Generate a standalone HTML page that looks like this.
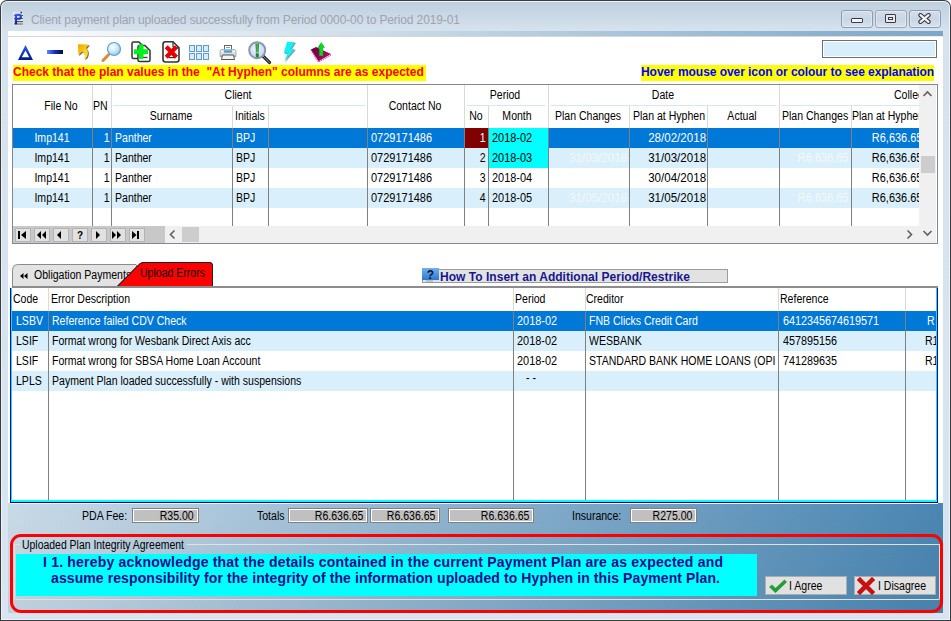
<!DOCTYPE html><html><head><meta charset="utf-8"><style>body{margin:0;width:951px;height:621px;overflow:hidden;position:relative;font-family:"Liberation Sans",sans-serif}</style></head><body><div style="position:absolute;left:0;top:0;width:951px;height:621px;background:#3c3c3c;border-radius:7px 7px 0 0"></div>
<div style="position:absolute;left:1px;top:1px;width:949px;height:619px;background:#eef3f9;border-radius:6px 6px 0 0"></div>
<div style="position:absolute;left:2px;top:2px;width:947px;height:617px;background:linear-gradient(#bfcfdd 0px,#d6e3ef 29px,#d8e4f0 100%);border-radius:5px 5px 0 0"></div>
<svg style="position:absolute;left:12px;top:11px" width="12" height="16" viewBox="0 0 12 16">
<defs><linearGradient id="pgr" x1="0" y1="0" x2="0.3" y2="1"><stop offset="0" stop-color="#4070ff"/><stop offset="1" stop-color="#0018a8"/></linearGradient></defs>
<rect x="1" y="1" width="10" height="13.6" fill="#ece8e0"/>
<g fill="#5a5a5a"><rect x="2" y="4" width="9" height="1"/><rect x="2" y="7" width="9" height="1"/><rect x="5" y="10" width="6" height="1.2"/><rect x="2" y="12.5" width="9" height="1"/></g>
<path d="M2.8 2.8H7.3Q9.9 2.8 9.9 5.7Q9.9 8.7 7.3 8.7H5.1V13.2H2.8Z M5.1 4.8V6.8H6.9Q7.7 6.8 7.7 5.8Q7.7 4.8 6.9 4.8Z" fill="url(#pgr)" fill-rule="evenodd"/>
<rect x="8.5" y="0.8" width="1.6" height="1.6" fill="#333"/>
</svg>
<div style="position:absolute;left:31px;top:11px;font-size:12px;line-height:18px;color:#a0a2b0;white-space:pre;letter-spacing:-0.12px">Client payment plan uploaded successfully from Period 0000-00 to Period 2019-01</div>
<div style="position:absolute;left:841px;top:10px;width:30px;height:16px;border:1px solid #8d9ab4;border-radius:3px;background:linear-gradient(#d2deea,#c8d6e4 50%,#d6e2ee);box-shadow:inset 0 0 0 1px rgba(255,255,255,0.35)"></div>
<div style="position:absolute;left:851px;top:18px;width:10px;height:3px;background:#f4f4f4;border:1px solid #3a3a4a;border-radius:1px"></div>
<div style="position:absolute;left:875px;top:10px;width:30px;height:16px;border:1px solid #a0a6ae;border-radius:3px;background:linear-gradient(#d2deea,#c8d6e4 50%,#d6e2ee);box-shadow:inset 0 0 0 1px rgba(255,255,255,0.35)"></div>
<div style="position:absolute;left:885px;top:14px;width:9px;height:7px;background:#e8e8e8;border:1px solid #3a3a4a;border-radius:1px"></div><div style="position:absolute;left:888px;top:17px;width:3px;height:1px;background:#f8f8f8;border:1px solid #3a3a4a"></div>
<div style="position:absolute;left:909px;top:10px;width:30px;height:16px;border:1px solid #8d9ab4;border-radius:3px;background:linear-gradient(#d2deea,#c8d6e4 50%,#d6e2ee);box-shadow:inset 0 0 0 1px rgba(255,255,255,0.35)"></div>
<svg style="position:absolute;left:918px;top:13px" width="13" height="11" viewBox="0 0 13 11"><path d="M2.5 2.2L10.5 8.8M10.5 2.2L2.5 8.8" stroke="#3a3a4a" stroke-width="4.4" stroke-linecap="round"/><path d="M2.5 2.2L10.5 8.8M10.5 2.2L2.5 8.8" stroke="#f2f2f2" stroke-width="2.2" stroke-linecap="round"/></svg>
<div style="position:absolute;left:8px;top:31px;width:935px;height:582px;background:#fff"></div>
<div style="position:absolute;left:8px;top:31px;width:935px;height:5px;background:linear-gradient(to right,#ffffff,#7ca6c6)"></div>
<div style="position:absolute;left:8px;top:36px;width:935px;height:1px;background:linear-gradient(to right,#d6d6d6,#d8d8d8 85%,#f0ece6)"></div>

<svg style="position:absolute;left:17px;top:44px" width="17" height="17" viewBox="0 0 17 17">
<defs><linearGradient id="tg" x1="0" y1="0" x2="0" y2="1"><stop offset="0" stop-color="#2a5cff"/><stop offset="1" stop-color="#001a80"/></linearGradient></defs>
<path d="M8.5 1L16 16H1z M8.5 6.5L4.8 13.2h7.4z" fill="url(#tg)" fill-rule="evenodd"/>
</svg>
<svg style="position:absolute;left:46px;top:49px" width="18" height="6" viewBox="0 0 18 6">
<defs><linearGradient id="mg" x1="0" y1="0" x2="1" y2="0"><stop offset="0" stop-color="#5c8cff"/><stop offset="0.5" stop-color="#1030c0"/><stop offset="1" stop-color="#000a40"/></linearGradient></defs>
<rect x="1" y="1" width="16" height="4" fill="url(#mg)"/>
</svg>
<svg style="position:absolute;left:72px;top:40px" width="22" height="22" viewBox="0 0 22 22">
<defs><linearGradient id="ag" x1="0" y1="0" x2="1" y2="1"><stop offset="0" stop-color="#f8a000"/><stop offset="0.45" stop-color="#f8c810"/><stop offset="1" stop-color="#fff060"/></linearGradient></defs>
<path d="M7 5.2L18 5.5L15 9C17.2 11 17.5 14.5 16 17.5C15.3 18.8 14.2 19.6 13 20C13.8 18 13.9 15.5 12.5 13.5C12 12.9 11.2 12.7 10.5 12.9L7.3 16Z" fill="#303028" opacity="0.7"/>
<path d="M6 4.2L17 4.5L14 8C16.2 10 16.5 13.5 15 16.5C14.3 17.8 13.2 18.6 12 19C12.8 17 12.9 14.5 11.5 12.5C11 11.9 10.2 11.7 9.5 11.9L6.3 15Z" fill="url(#ag)"/>
</svg>
<svg style="position:absolute;left:101px;top:41px" width="21" height="21" viewBox="0 0 21 21">
<defs><radialGradient id="lg" cx="0.4" cy="0.35" r="0.7"><stop offset="0" stop-color="#ffffff"/><stop offset="0.6" stop-color="#bfe6ff"/><stop offset="1" stop-color="#7cc0ec"/></radialGradient></defs>
<path d="M2 19.5L7.5 13.8" stroke="#d88a3a" stroke-width="3" stroke-linecap="round"/>
<circle cx="13" cy="8" r="6.5" fill="url(#lg)" stroke="#6a9cc8" stroke-width="1.2"/>
</svg>
<svg style="position:absolute;left:128px;top:38px" width="26" height="26" viewBox="0 0 26 26">
<path d="M5.5 4h5.5l3 3v13.5H5.5q-1.5 0-1.5-1.5V5.5q0-1.5 1.5-1.5z" fill="#fafafa" stroke="#333" stroke-width="1.5" stroke-linejoin="round"/>
<path d="M11.5 7.5h5.5l5 5v9.5q0 1.5-1.5 1.5h-9q-1.5 0-1.5-1.5V9q0-1.5 1.5-1.5z" fill="#fafafa" stroke="#333" stroke-width="1.5" stroke-linejoin="round"/>
<rect x="12" y="18.8" width="7.5" height="1.3" fill="#444"/>
<rect x="6" y="11.3" width="14" height="4.8" fill="#00f020"/>
<rect x="10.7" y="6.3" width="4.8" height="14.6" fill="#00f020"/>
</svg>
<svg style="position:absolute;left:158px;top:38px" width="26" height="26" viewBox="0 0 26 26">
<path d="M7.5 3.8h7.5l6 6V21.5q0 2.5-2.5 2.5h-11q-2.5 0-2.5-2.5V6.3q0-2.5 2.5-2.5z" fill="#fff" stroke="#333" stroke-width="1.6" stroke-linejoin="round"/>
<path d="M15 3.8v4q0 2 2 2h4" fill="none" stroke="#333" stroke-width="1.2"/>
<rect x="11" y="19" width="6" height="1.2" fill="#333"/>
<path d="M8.2 8.8L18.5 19.2M18.5 8.8L8.2 19.2" stroke="#e80000" stroke-width="4.3"/>
</svg>
<svg style="position:absolute;left:188px;top:44px" width="22" height="17" viewBox="0 0 22 17">
<g fill="#d8ecfc" stroke="#5c9ad8" stroke-width="1">
<rect x="1.5" y="1.5" width="5" height="6"/><rect x="8.5" y="1.5" width="5" height="6"/><rect x="15.5" y="1.5" width="5" height="6"/>
<rect x="1.5" y="9.5" width="5" height="6"/><rect x="8.5" y="9.5" width="5" height="6"/><rect x="15.5" y="9.5" width="5" height="6"/>
</g></svg>
<svg style="position:absolute;left:219px;top:44px" width="18" height="17" viewBox="0 0 18 17">
<defs><linearGradient id="pg" x1="0" y1="0" x2="0" y2="1"><stop offset="0" stop-color="#f8f8f8"/><stop offset="1" stop-color="#c8c8c8"/></linearGradient>
<linearGradient id="pb" x1="0" y1="0" x2="0" y2="1"><stop offset="0" stop-color="#8ad0f0"/><stop offset="1" stop-color="#2a88c0"/></linearGradient></defs>
<rect x="5.5" y="1.5" width="7" height="5" fill="#fff" stroke="#666" stroke-width="1"/>
<rect x="7" y="3" width="4" height="0.8" fill="#888"/>
<path d="M1 7.5Q1 5.5 3 5.5H15Q17 5.5 17 7.5V12.5H1z" fill="url(#pg)" stroke="#999" stroke-width="0.8"/>
<path d="M4.5 5.5H13.5L12.8 8.5H5.2z" fill="url(#pb)"/>
<path d="M3.5 11H14.5L15.5 15.5H2.5z" fill="#f4f4f4" stroke="#555" stroke-width="1"/>
</svg>
<svg style="position:absolute;left:247px;top:40px" width="25" height="25" viewBox="0 0 25 25">
<defs><radialGradient id="mg2" cx="0.45" cy="0.4" r="0.6"><stop offset="0" stop-color="#f4f8ff"/><stop offset="1" stop-color="#c0d0ec"/></radialGradient>
<linearGradient id="ex" x1="0" y1="0" x2="1" y2="0"><stop offset="0" stop-color="#108020"/><stop offset="0.5" stop-color="#50c060"/><stop offset="1" stop-color="#107020"/></linearGradient></defs>
<path d="M16 16L22.5 22.5" stroke="#303030" stroke-width="3.2" stroke-linecap="round"/>
<path d="M16 16L22.5 22.5" stroke="#909090" stroke-width="1" stroke-linecap="round" stroke-dasharray="1 1"/>
<circle cx="10.2" cy="10.2" r="8" fill="url(#mg2)" stroke="#8898b0" stroke-width="2"/>
<path d="M8.5 3.5h3.5l-.4 9h-2.7z" fill="url(#ex)"/><path d="M8.8 13.3h3v3.2l-1.5 1.2l-1.5-1.2z" fill="#188828"/>
</svg>
<svg style="position:absolute;left:282px;top:41px" width="16" height="23" viewBox="0 0 16 23">
<path d="M6 2H14L9.5 9H13.8L3 21.5L6.8 13H2.8Z" fill="#404048" opacity="0.55"/>
<path d="M5 1H13L8.5 8H12.8L2 20.5L5.8 12H1.8Z" fill="#10f0f8"/>
</svg>
<svg style="position:absolute;left:310px;top:41px" width="22" height="22" viewBox="0 0 22 22">
<defs><linearGradient id="bk" x1="0" y1="0" x2="1" y2="0.4"><stop offset="0" stop-color="#600030"/><stop offset="1" stop-color="#a8106a"/></linearGradient>
<linearGradient id="ar" x1="0" y1="0" x2="1" y2="0"><stop offset="0" stop-color="#00a010"/><stop offset="0.5" stop-color="#10e020"/><stop offset="1" stop-color="#00b010"/></linearGradient></defs>
<path d="M1 9.2L8.5 21L21 13.8" fill="none" stroke="#ff30c0" stroke-width="1.3" stroke-dasharray="1.2 0.9"/>
<path d="M1 8.6L6 6L21 13L8.5 20.2Z" fill="url(#bk)"/>
<path d="M11.3 1L15 6.8H13.1V14.7H9.2V6.8H7.6Z" fill="url(#ar)"/>
</svg>

<div style="position:absolute;left:13px;top:65px;width:413px;height:16px;background:#ffff00"></div>
<div style="position:absolute;left:13px;top:62px;height:20px;line-height:20px;font-size:12px;font-weight:700;color:#ff0000;white-space:pre">Check that the plan values in the  "At Hyphen" columns are as expected</div>
<div style="position:absolute;left:641px;top:65px;width:293px;height:16px;background:#ffff00"></div>
<div style="position:absolute;left:641px;top:62px;height:20px;line-height:20px;font-size:12px;font-weight:700;color:#0000ff;white-space:pre;letter-spacing:-0.06px">Hover mouse over icon or colour to see explanation</div>
<div style="position:absolute;left:822px;top:40px;width:113px;height:16px;background:#d8eefa;border:1px solid #6e6e6e;box-shadow:inset 0 0 0 1px #fff"></div>
<div style="position:absolute;left:12px;top:84px;width:926px;height:160px;background:#fff;border:1px solid #828790;box-sizing:border-box"></div>
<div style="position:absolute;left:113px;top:105px;width:252px;height:1px;background:#d5e6f5"></div>
<div style="position:absolute;left:467px;top:105px;width:78px;height:1px;background:#d5e6f5"></div>
<div style="position:absolute;left:551px;top:105px;width:225px;height:1px;background:#d5e6f5"></div>
<div style="position:absolute;left:782px;top:105px;width:137px;height:1px;background:#d5e6f5"></div>
<div style="position:absolute;left:13px;top:128px;width:906px;height:20px;background:#0078d7"></div>
<div style="position:absolute;left:13px;top:148px;width:906px;height:20px;background:#d9effb"></div>
<div style="position:absolute;left:13px;top:168px;width:906px;height:20px;background:#ffffff"></div>
<div style="position:absolute;left:13px;top:188px;width:906px;height:20px;background:#d9effb"></div>
<div style="position:absolute;left:465px;top:128px;width:23px;height:20px;background:#800000"></div>
<div style="position:absolute;left:489px;top:128px;width:59px;height:40px;background:#00ffff"></div>
<div style="position:absolute;left:92px;top:85px;width:1px;height:43px;background:#dadada"></div>
<div style="position:absolute;left:111px;top:85px;width:1px;height:43px;background:#dadada"></div>
<div style="position:absolute;left:367px;top:85px;width:1px;height:43px;background:#dadada"></div>
<div style="position:absolute;left:464px;top:85px;width:1px;height:43px;background:#dadada"></div>
<div style="position:absolute;left:548px;top:85px;width:1px;height:43px;background:#dadada"></div>
<div style="position:absolute;left:779px;top:85px;width:1px;height:43px;background:#dadada"></div>
<div style="position:absolute;left:232px;top:106px;width:1px;height:22px;background:#dadada"></div>
<div style="position:absolute;left:268px;top:106px;width:1px;height:22px;background:#dadada"></div>
<div style="position:absolute;left:488px;top:106px;width:1px;height:22px;background:#dadada"></div>
<div style="position:absolute;left:629px;top:106px;width:1px;height:22px;background:#dadada"></div>
<div style="position:absolute;left:707px;top:106px;width:1px;height:22px;background:#dadada"></div>
<div style="position:absolute;left:851px;top:106px;width:1px;height:22px;background:#dadada"></div>
<div style="position:absolute;left:92px;top:128px;width:1px;height:98px;background:#808080"></div>
<div style="position:absolute;left:111px;top:128px;width:1px;height:98px;background:#808080"></div>
<div style="position:absolute;left:367px;top:128px;width:1px;height:98px;background:#808080"></div>
<div style="position:absolute;left:464px;top:128px;width:1px;height:98px;background:#808080"></div>
<div style="position:absolute;left:548px;top:128px;width:1px;height:98px;background:#808080"></div>
<div style="position:absolute;left:779px;top:128px;width:1px;height:98px;background:#808080"></div>
<div style="position:absolute;left:232px;top:128px;width:1px;height:98px;background:#808080"></div>
<div style="position:absolute;left:268px;top:128px;width:1px;height:98px;background:#808080"></div>
<div style="position:absolute;left:488px;top:128px;width:1px;height:98px;background:#808080"></div>
<div style="position:absolute;left:629px;top:128px;width:1px;height:98px;background:#808080"></div>
<div style="position:absolute;left:707px;top:128px;width:1px;height:98px;background:#808080"></div>
<div style="position:absolute;left:851px;top:128px;width:1px;height:98px;background:#808080"></div>
<div style="position:absolute;left:13px;top:226px;width:906px;height:17px;background:#f0f0f0"></div>
<div style="position:absolute;left:13px;top:226px;width:152px;height:17px;background:#c8c8c8"></div>
<div style="position:absolute;left:15px;top:228px;width:16px;height:14px;background:#e1e1e1;border:1px solid #b4b4b4;box-sizing:border-box"></div>
<div style="position:absolute;left:34px;top:228px;width:16px;height:14px;background:#e1e1e1;border:1px solid #b4b4b4;box-sizing:border-box"></div>
<div style="position:absolute;left:53px;top:228px;width:16px;height:14px;background:#e1e1e1;border:1px solid #b4b4b4;box-sizing:border-box"></div>
<div style="position:absolute;left:72px;top:228px;width:16px;height:14px;background:#e1e1e1;border:1px solid #b4b4b4;box-sizing:border-box"></div>
<div style="position:absolute;left:91px;top:228px;width:16px;height:14px;background:#e1e1e1;border:1px solid #b4b4b4;box-sizing:border-box"></div>
<div style="position:absolute;left:110px;top:228px;width:16px;height:14px;background:#e1e1e1;border:1px solid #b4b4b4;box-sizing:border-box"></div>
<div style="position:absolute;left:129px;top:228px;width:16px;height:14px;background:#e1e1e1;border:1px solid #b4b4b4;box-sizing:border-box"></div>
<div style="position:absolute;left:919px;top:85px;width:17px;height:158px;background:#f0f0f0"></div>
<div style="position:absolute;left:921px;top:156px;width:14px;height:17px;background:#cdcdcd"></div>
<div style="position:absolute;left:182px;top:227px;width:17px;height:15px;background:#cdcdcd"></div>

<svg style="position:absolute;left:15px;top:228px" width="130" height="14" viewBox="0 0 130 14" fill="#000">
<rect x="3" y="3" width="2" height="8"/><path d="M11 3v8L6 7z"/>
<path d="M26 3v8l-4-4z"/><path d="M31 3v8l-4-4z"/>
<path d="M46 3v8l-4-4z"/>
<text x="65" y="10.5" font-size="10" font-weight="700" font-family="Liberation Sans" text-anchor="middle">?</text>
<path d="M81 3v8l4-4z"/>
<path d="M97 3v8l4-4z"/><path d="M102 3v8l4-4z"/>
<path d="M117 3v8l4.5-4z"/><rect x="122" y="3" width="2" height="8"/>
</svg>
<svg style="position:absolute;left:168px;top:229px" width="10" height="11" viewBox="0 0 10 11"><path d="M6.5 1.5L2.5 5.5L6.5 9.5" fill="none" stroke="#606060" stroke-width="1.6"/></svg>
<svg style="position:absolute;left:904px;top:229px" width="10" height="11" viewBox="0 0 10 11"><path d="M3.5 1.5L7.5 5.5L3.5 9.5" fill="none" stroke="#606060" stroke-width="1.6"/></svg>
<svg style="position:absolute;left:922px;top:89px" width="11" height="10" viewBox="0 0 11 10"><path d="M1.5 7L5.5 3L9.5 7" fill="none" stroke="#606060" stroke-width="1.6"/></svg>
<svg style="position:absolute;left:922px;top:228px" width="11" height="10" viewBox="0 0 11 10"><path d="M1.5 3L5.5 7L9.5 3" fill="none" stroke="#606060" stroke-width="1.6"/></svg>

<div style="position:absolute;left:61px;top:96px;height:20px;line-height:20px;font-size:12px;font-weight:400;color:#000;white-space:pre;transform:translateX(-50%) scaleX(0.8775);transform-origin:50% 0;">File No</div>
<div style="position:absolute;left:93px;top:96px;height:20px;line-height:20px;font-size:12px;font-weight:400;color:#000;white-space:pre;transform:scaleX(0.8775);transform-origin:0 0;">PN</div>
<div style="position:absolute;left:238px;top:85px;height:20px;line-height:20px;font-size:12px;font-weight:400;color:#000;white-space:pre;transform:translateX(-50%) scaleX(0.8775);transform-origin:50% 0;">Client</div>
<div style="position:absolute;left:171px;top:106px;height:20px;line-height:20px;font-size:12px;font-weight:400;color:#000;white-space:pre;transform:translateX(-50%) scaleX(0.8775);transform-origin:50% 0;">Surname</div>
<div style="position:absolute;left:235px;top:106px;height:20px;line-height:20px;font-size:12px;font-weight:400;color:#000;white-space:pre;transform:scaleX(0.8775);transform-origin:0 0;">Initials</div>
<div style="position:absolute;left:415px;top:96px;height:20px;line-height:20px;font-size:12px;font-weight:400;color:#000;white-space:pre;transform:translateX(-50%) scaleX(0.8775);transform-origin:50% 0;">Contact No</div>
<div style="position:absolute;left:505px;top:85px;height:20px;line-height:20px;font-size:12px;font-weight:400;color:#000;white-space:pre;transform:translateX(-50%) scaleX(0.8775);transform-origin:50% 0;">Period</div>
<div style="position:absolute;left:476px;top:106px;height:20px;line-height:20px;font-size:12px;font-weight:400;color:#000;white-space:pre;transform:translateX(-50%) scaleX(0.8775);transform-origin:50% 0;">No</div>
<div style="position:absolute;left:517px;top:106px;height:20px;line-height:20px;font-size:12px;font-weight:400;color:#000;white-space:pre;transform:translateX(-50%) scaleX(0.8775);transform-origin:50% 0;">Month</div>
<div style="position:absolute;left:588px;top:106px;height:20px;line-height:20px;font-size:12px;font-weight:400;color:#000;white-space:pre;transform:translateX(-50%) scaleX(0.8775);transform-origin:50% 0;">Plan Changes</div>
<div style="position:absolute;left:663px;top:85px;height:20px;line-height:20px;font-size:12px;font-weight:400;color:#000;white-space:pre;transform:translateX(-50%) scaleX(0.8775);transform-origin:50% 0;">Date</div>
<div style="position:absolute;left:633px;top:106px;height:20px;line-height:20px;font-size:12px;font-weight:400;color:#000;white-space:pre;transform:scaleX(0.8775);transform-origin:0 0;">Plan at Hyphen</div>
<div style="position:absolute;left:742px;top:106px;height:20px;line-height:20px;font-size:12px;font-weight:400;color:#000;white-space:pre;transform:translateX(-50%) scaleX(0.8775);transform-origin:50% 0;">Actual</div>
<div style="position:absolute;left:782px;top:106px;height:20px;line-height:20px;font-size:12px;font-weight:400;color:#000;white-space:pre;transform:scaleX(0.8775);transform-origin:0 0;">Plan Changes</div>
<div style="position:absolute;left:852px;top:85px;width:67px;height:43px;overflow:hidden">
<div style="position:absolute;left:0px;top:21px;height:20px;line-height:20px;font-size:12px;font-weight:400;color:#000;white-space:pre;transform:scaleX(0.8775);transform-origin:0 0;">Plan at Hyphen</div>
<div style="position:absolute;left:42px;top:0px;height:20px;line-height:20px;font-size:12px;font-weight:400;color:#000;white-space:pre;transform:scaleX(0.8775);transform-origin:0 0;">Collection</div>
</div>
<div style="position:absolute;left:52px;top:128px;height:20px;line-height:20px;font-size:12px;font-weight:400;color:#fff;white-space:pre;transform:translateX(-50%) scaleX(0.8775);transform-origin:50% 0;">Imp141</div>
<div style="position:absolute;right:841px;top:128px;height:20px;line-height:20px;font-size:12px;font-weight:400;color:#fff;white-space:pre;transform:scaleX(0.8775);transform-origin:100% 0;">1</div>
<div style="position:absolute;left:115px;top:128px;height:20px;line-height:20px;font-size:12px;font-weight:400;color:#fff;white-space:pre;transform:scaleX(0.8775);transform-origin:0 0;">Panther</div>
<div style="position:absolute;left:236px;top:128px;height:20px;line-height:20px;font-size:12px;font-weight:400;color:#fff;white-space:pre;transform:scaleX(0.8775);transform-origin:0 0;">BPJ</div>
<div style="position:absolute;left:371px;top:128px;height:20px;line-height:20px;font-size:12px;font-weight:400;color:#fff;white-space:pre;transform:scaleX(0.915);transform-origin:0 0;">0729171486</div>
<div style="position:absolute;right:465px;top:128px;height:20px;line-height:20px;font-size:12px;font-weight:400;color:#fff;white-space:pre;transform:scaleX(0.8775);transform-origin:100% 0;">1</div>
<div style="position:absolute;left:492px;top:128px;height:20px;line-height:20px;font-size:12px;font-weight:400;color:#000;white-space:pre;transform:scaleX(0.91);transform-origin:0 0;">2018-02</div>
<div style="position:absolute;right:245px;top:128px;height:20px;line-height:20px;font-size:12px;font-weight:400;color:#fff;white-space:pre;transform:scaleX(0.964);transform-origin:100% 0;">28/02/2018</div>
<div style="position:absolute;left:52px;top:148px;height:20px;line-height:20px;font-size:12px;font-weight:400;color:#000;white-space:pre;transform:translateX(-50%) scaleX(0.8775);transform-origin:50% 0;">Imp141</div>
<div style="position:absolute;right:841px;top:148px;height:20px;line-height:20px;font-size:12px;font-weight:400;color:#000;white-space:pre;transform:scaleX(0.8775);transform-origin:100% 0;">1</div>
<div style="position:absolute;left:115px;top:148px;height:20px;line-height:20px;font-size:12px;font-weight:400;color:#000;white-space:pre;transform:scaleX(0.8775);transform-origin:0 0;">Panther</div>
<div style="position:absolute;left:236px;top:148px;height:20px;line-height:20px;font-size:12px;font-weight:400;color:#000;white-space:pre;transform:scaleX(0.8775);transform-origin:0 0;">BPJ</div>
<div style="position:absolute;left:371px;top:148px;height:20px;line-height:20px;font-size:12px;font-weight:400;color:#000;white-space:pre;transform:scaleX(0.915);transform-origin:0 0;">0729171486</div>
<div style="position:absolute;right:465px;top:148px;height:20px;line-height:20px;font-size:12px;font-weight:400;color:#000;white-space:pre;transform:scaleX(0.8775);transform-origin:100% 0;">2</div>
<div style="position:absolute;left:492px;top:148px;height:20px;line-height:20px;font-size:12px;font-weight:400;color:#000;white-space:pre;transform:scaleX(0.91);transform-origin:0 0;">2018-03</div>
<div style="position:absolute;right:324px;top:148px;height:20px;line-height:20px;font-size:12px;font-weight:400;color:#f4f8fb;white-space:pre;transform:scaleX(0.964);transform-origin:100% 0;">31/03/2018</div>
<div style="position:absolute;right:245px;top:148px;height:20px;line-height:20px;font-size:12px;font-weight:400;color:#000;white-space:pre;transform:scaleX(0.964);transform-origin:100% 0;">31/03/2018</div>
<div style="position:absolute;right:103px;top:148px;height:20px;line-height:20px;font-size:12px;font-weight:400;color:#f4f8fb;white-space:pre;transform:scaleX(0.9125);transform-origin:100% 0;">R6,636.65</div>
<div style="position:absolute;left:52px;top:168px;height:20px;line-height:20px;font-size:12px;font-weight:400;color:#000;white-space:pre;transform:translateX(-50%) scaleX(0.8775);transform-origin:50% 0;">Imp141</div>
<div style="position:absolute;right:841px;top:168px;height:20px;line-height:20px;font-size:12px;font-weight:400;color:#000;white-space:pre;transform:scaleX(0.8775);transform-origin:100% 0;">1</div>
<div style="position:absolute;left:115px;top:168px;height:20px;line-height:20px;font-size:12px;font-weight:400;color:#000;white-space:pre;transform:scaleX(0.8775);transform-origin:0 0;">Panther</div>
<div style="position:absolute;left:236px;top:168px;height:20px;line-height:20px;font-size:12px;font-weight:400;color:#000;white-space:pre;transform:scaleX(0.8775);transform-origin:0 0;">BPJ</div>
<div style="position:absolute;left:371px;top:168px;height:20px;line-height:20px;font-size:12px;font-weight:400;color:#000;white-space:pre;transform:scaleX(0.915);transform-origin:0 0;">0729171486</div>
<div style="position:absolute;right:465px;top:168px;height:20px;line-height:20px;font-size:12px;font-weight:400;color:#000;white-space:pre;transform:scaleX(0.8775);transform-origin:100% 0;">3</div>
<div style="position:absolute;left:492px;top:168px;height:20px;line-height:20px;font-size:12px;font-weight:400;color:#000;white-space:pre;transform:scaleX(0.91);transform-origin:0 0;">2018-04</div>
<div style="position:absolute;right:245px;top:168px;height:20px;line-height:20px;font-size:12px;font-weight:400;color:#000;white-space:pre;transform:scaleX(0.964);transform-origin:100% 0;">30/04/2018</div>
<div style="position:absolute;left:52px;top:188px;height:20px;line-height:20px;font-size:12px;font-weight:400;color:#000;white-space:pre;transform:translateX(-50%) scaleX(0.8775);transform-origin:50% 0;">Imp141</div>
<div style="position:absolute;right:841px;top:188px;height:20px;line-height:20px;font-size:12px;font-weight:400;color:#000;white-space:pre;transform:scaleX(0.8775);transform-origin:100% 0;">1</div>
<div style="position:absolute;left:115px;top:188px;height:20px;line-height:20px;font-size:12px;font-weight:400;color:#000;white-space:pre;transform:scaleX(0.8775);transform-origin:0 0;">Panther</div>
<div style="position:absolute;left:236px;top:188px;height:20px;line-height:20px;font-size:12px;font-weight:400;color:#000;white-space:pre;transform:scaleX(0.8775);transform-origin:0 0;">BPJ</div>
<div style="position:absolute;left:371px;top:188px;height:20px;line-height:20px;font-size:12px;font-weight:400;color:#000;white-space:pre;transform:scaleX(0.915);transform-origin:0 0;">0729171486</div>
<div style="position:absolute;right:465px;top:188px;height:20px;line-height:20px;font-size:12px;font-weight:400;color:#000;white-space:pre;transform:scaleX(0.8775);transform-origin:100% 0;">4</div>
<div style="position:absolute;left:492px;top:188px;height:20px;line-height:20px;font-size:12px;font-weight:400;color:#000;white-space:pre;transform:scaleX(0.91);transform-origin:0 0;">2018-05</div>
<div style="position:absolute;right:324px;top:188px;height:20px;line-height:20px;font-size:12px;font-weight:400;color:#f4f8fb;white-space:pre;transform:scaleX(0.964);transform-origin:100% 0;">31/05/2018</div>
<div style="position:absolute;right:245px;top:188px;height:20px;line-height:20px;font-size:12px;font-weight:400;color:#000;white-space:pre;transform:scaleX(0.964);transform-origin:100% 0;">31/05/2018</div>
<div style="position:absolute;right:103px;top:188px;height:20px;line-height:20px;font-size:12px;font-weight:400;color:#f4f8fb;white-space:pre;transform:scaleX(0.9125);transform-origin:100% 0;">R6,636.65</div>
<div style="position:absolute;left:852px;top:128px;width:67px;height:80px;overflow:hidden">
<div style="position:absolute;right:-3.5px;top:0px;height:20px;line-height:20px;font-size:12px;font-weight:400;color:#fff;white-space:pre;transform:scaleX(0.9125);transform-origin:100% 0;">R6,636.65</div>
<div style="position:absolute;right:-3.5px;top:20px;height:20px;line-height:20px;font-size:12px;font-weight:400;color:#000;white-space:pre;transform:scaleX(0.9125);transform-origin:100% 0;">R6,636.65</div>
<div style="position:absolute;right:-3.5px;top:40px;height:20px;line-height:20px;font-size:12px;font-weight:400;color:#000;white-space:pre;transform:scaleX(0.9125);transform-origin:100% 0;">R6,636.65</div>
<div style="position:absolute;right:-3.5px;top:60px;height:20px;line-height:20px;font-size:12px;font-weight:400;color:#000;white-space:pre;transform:scaleX(0.9125);transform-origin:100% 0;">R6,636.65</div>
</div>

<svg style="position:absolute;left:8px;top:258px" width="220" height="32" viewBox="0 0 220 32">
<path d="M4.5 29V12.5Q4.5 6.5 10.5 6.5H128L140 29" fill="#e3e3e3" stroke="#8a8a8a" stroke-width="1"/>
<path d="M108.5 29L131 6.5Q133 4.5 136 4.5H201.5Q204.5 4.5 204.5 7.5V29" fill="#ff0000" stroke="#202020" stroke-width="1"/>
<rect x="109" y="28" width="95.5" height="1.5" fill="#ff0000"/>
</svg>

<div style="position:absolute;left:12px;top:264px;width:125px;height:22px;overflow:hidden">
<svg style="position:absolute;left:8px;top:9px" width="8" height="6" viewBox="0 0 8 6"><path d="M0 3L3.5 0V6z M4 3L7.5 0V6z" fill="#000"/></svg>
<div style="position:absolute;left:22px;top:1px;height:20px;line-height:20px;font-size:12px;font-weight:400;color:#000;white-space:pre;transform:scaleX(0.8775);transform-origin:0 0;">Obligation Payments</div>
</div>
<svg style="position:absolute;left:8px;top:258px" width="220" height="32" viewBox="0 0 220 32">
<path d="M108.5 29.5L131 6.5Q133 4.5 136 4.5H201.5Q204.5 4.5 204.5 7.5V29.5" fill="#ff0000" stroke="#202020" stroke-width="1"/>
</svg>
<div style="position:absolute;left:140px;top:263px;height:20px;line-height:20px;font-size:12px;font-weight:400;color:#000;white-space:pre;transform:scaleX(0.8775);transform-origin:0 0;">Upload Errors</div>
<div style="position:absolute;left:422px;top:269px;width:306px;height:14px;background:#e2e2e2;border:1px solid #9c9c9c;box-sizing:border-box"></div>
<svg style="position:absolute;left:421px;top:267px" width="19" height="17" viewBox="0 0 19 17">
<defs><linearGradient id="qg" x1="0" y1="0" x2="0" y2="1"><stop offset="0" stop-color="#70b0f0"/><stop offset="1" stop-color="#2a78d0"/></linearGradient></defs>
<rect x="1" y="1" width="17" height="12" fill="url(#qg)"/>
<rect x="5" y="13" width="7" height="2" fill="#b8c0c8"/>
<text x="9.5" y="11.5" font-family="Liberation Sans" font-weight="700" font-size="12" text-anchor="middle" fill="#101020">?</text>
</svg>
<div style="position:absolute;left:440px;top:267px;height:20px;line-height:20px;font-size:12px;font-weight:700;color:#161690;white-space:pre;letter-spacing:0.03px">How To Insert an Additional Period/Restrike</div>
<div style="position:absolute;left:12px;top:286px;width:926px;height:2px;background:#8c8c8c"></div>
<div style="position:absolute;left:8px;top:286px;width:108px;height:2px;background:transparent"></div>
<div style="position:absolute;left:10px;top:288px;width:928px;height:215px;background:#fff"></div>
<div style="position:absolute;left:10px;top:288px;width:1px;height:215px;background:#000090"></div>
<div style="position:absolute;left:11px;top:288px;width:1px;height:213px;background:#00e8ff"></div>
<div style="position:absolute;left:937px;top:288px;width:1px;height:215px;background:#000090"></div>
<div style="position:absolute;left:936px;top:288px;width:1px;height:213px;background:#00e8ff"></div>
<div style="position:absolute;left:10px;top:502px;width:928px;height:1px;background:#000090"></div>
<div style="position:absolute;left:11px;top:500px;width:926px;height:2px;background:#00ffff"></div>
<div style="position:absolute;left:12px;top:311px;width:924px;height:20px;background:#0078d7"></div>
<div style="position:absolute;left:12px;top:331px;width:924px;height:20px;background:#d9effb"></div>
<div style="position:absolute;left:12px;top:351px;width:924px;height:20px;background:#ffffff"></div>
<div style="position:absolute;left:12px;top:371px;width:924px;height:20px;background:#d9effb"></div>
<div style="position:absolute;left:48px;top:288px;width:1px;height:23px;background:#dadada"></div>
<div style="position:absolute;left:48px;top:311px;width:1px;height:189px;background:#808080"></div>
<div style="position:absolute;left:513px;top:288px;width:1px;height:23px;background:#dadada"></div>
<div style="position:absolute;left:513px;top:311px;width:1px;height:189px;background:#808080"></div>
<div style="position:absolute;left:585px;top:288px;width:1px;height:23px;background:#dadada"></div>
<div style="position:absolute;left:585px;top:311px;width:1px;height:189px;background:#808080"></div>
<div style="position:absolute;left:778px;top:288px;width:1px;height:23px;background:#dadada"></div>
<div style="position:absolute;left:778px;top:311px;width:1px;height:189px;background:#808080"></div>
<div style="position:absolute;left:905px;top:288px;width:1px;height:23px;background:#dadada"></div>
<div style="position:absolute;left:905px;top:311px;width:1px;height:189px;background:#808080"></div>
<div style="position:absolute;left:13px;top:289px;height:20px;line-height:20px;font-size:12px;font-weight:400;color:#000;white-space:pre;transform:scaleX(0.8775);transform-origin:0 0;">Code</div>
<div style="position:absolute;left:51px;top:289px;height:20px;line-height:20px;font-size:12px;font-weight:400;color:#000;white-space:pre;transform:scaleX(0.8775);transform-origin:0 0;">Error Description</div>
<div style="position:absolute;left:515px;top:289px;height:20px;line-height:20px;font-size:12px;font-weight:400;color:#000;white-space:pre;transform:scaleX(0.8775);transform-origin:0 0;">Period</div>
<div style="position:absolute;left:586px;top:289px;height:20px;line-height:20px;font-size:12px;font-weight:400;color:#000;white-space:pre;transform:scaleX(0.8775);transform-origin:0 0;">Creditor</div>
<div style="position:absolute;left:780px;top:289px;height:20px;line-height:20px;font-size:12px;font-weight:400;color:#000;white-space:pre;transform:scaleX(0.8775);transform-origin:0 0;">Reference</div>
<div style="position:absolute;left:16px;top:311px;height:20px;line-height:20px;font-size:12px;font-weight:400;color:#fff;white-space:pre;transform:scaleX(0.8775);transform-origin:0 0;">LSBV</div>
<div style="position:absolute;left:52px;top:311px;height:20px;line-height:20px;font-size:12px;font-weight:400;color:#fff;white-space:pre;transform:scaleX(0.8775);transform-origin:0 0;">Reference failed CDV Check</div>
<div style="position:absolute;left:517px;top:311px;height:20px;line-height:20px;font-size:12px;font-weight:400;color:#fff;white-space:pre;transform:scaleX(0.91);transform-origin:0 0;">2018-02</div>
<div style="position:absolute;left:586px;top:311px;width:192px;height:20px;overflow:hidden">
<div style="position:absolute;left:3px;top:0px;height:20px;line-height:20px;font-size:12px;font-weight:400;color:#fff;white-space:pre;transform:scaleX(0.8775);transform-origin:0 0;">FNB Clicks Credit Card</div>
</div>
<div style="position:absolute;left:783px;top:311px;height:20px;line-height:20px;font-size:12px;font-weight:400;color:#fff;white-space:pre;transform:scaleX(0.9);transform-origin:0 0;">6412345674619571</div>
<div style="position:absolute;left:906px;top:311px;width:30px;height:20px;overflow:hidden">
<div style="position:absolute;right:1px;top:0px;height:20px;line-height:20px;font-size:12px;font-weight:400;color:#fff;white-space:pre;transform:scaleX(0.8775);transform-origin:100% 0;">R</div>
</div>
<div style="position:absolute;left:16px;top:331px;height:20px;line-height:20px;font-size:12px;font-weight:400;color:#000;white-space:pre;transform:scaleX(0.8775);transform-origin:0 0;">LSIF</div>
<div style="position:absolute;left:52px;top:331px;height:20px;line-height:20px;font-size:12px;font-weight:400;color:#000;white-space:pre;transform:scaleX(0.8775);transform-origin:0 0;">Format wrong for Wesbank Direct Axis acc</div>
<div style="position:absolute;left:517px;top:331px;height:20px;line-height:20px;font-size:12px;font-weight:400;color:#000;white-space:pre;transform:scaleX(0.91);transform-origin:0 0;">2018-02</div>
<div style="position:absolute;left:586px;top:331px;width:192px;height:20px;overflow:hidden">
<div style="position:absolute;left:3px;top:0px;height:20px;line-height:20px;font-size:12px;font-weight:400;color:#000;white-space:pre;transform:scaleX(0.8775);transform-origin:0 0;">WESBANK</div>
</div>
<div style="position:absolute;left:783px;top:331px;height:20px;line-height:20px;font-size:12px;font-weight:400;color:#000;white-space:pre;transform:scaleX(0.9);transform-origin:0 0;">457895156</div>
<div style="position:absolute;left:906px;top:331px;width:30px;height:20px;overflow:hidden">
<div style="position:absolute;right:-2px;top:0px;height:20px;line-height:20px;font-size:12px;font-weight:400;color:#000;white-space:pre;transform:scaleX(0.8775);transform-origin:100% 0;">R1</div>
</div>
<div style="position:absolute;left:16px;top:351px;height:20px;line-height:20px;font-size:12px;font-weight:400;color:#000;white-space:pre;transform:scaleX(0.8775);transform-origin:0 0;">LSIF</div>
<div style="position:absolute;left:52px;top:351px;height:20px;line-height:20px;font-size:12px;font-weight:400;color:#000;white-space:pre;transform:scaleX(0.8775);transform-origin:0 0;">Format wrong for SBSA Home Loan Account</div>
<div style="position:absolute;left:517px;top:351px;height:20px;line-height:20px;font-size:12px;font-weight:400;color:#000;white-space:pre;transform:scaleX(0.91);transform-origin:0 0;">2018-02</div>
<div style="position:absolute;left:586px;top:351px;width:192px;height:20px;overflow:hidden">
<div style="position:absolute;left:3px;top:0px;height:20px;line-height:20px;font-size:12px;font-weight:400;color:#000;white-space:pre;transform:scaleX(0.8775);transform-origin:0 0;">STANDARD BANK HOME LOANS (OPI</div>
</div>
<div style="position:absolute;left:783px;top:351px;height:20px;line-height:20px;font-size:12px;font-weight:400;color:#000;white-space:pre;transform:scaleX(0.9);transform-origin:0 0;">741289635</div>
<div style="position:absolute;left:906px;top:351px;width:30px;height:20px;overflow:hidden">
<div style="position:absolute;right:-2px;top:0px;height:20px;line-height:20px;font-size:12px;font-weight:400;color:#000;white-space:pre;transform:scaleX(0.8775);transform-origin:100% 0;">R1</div>
</div>
<div style="position:absolute;left:16px;top:371px;height:20px;line-height:20px;font-size:12px;font-weight:400;color:#000;white-space:pre;transform:scaleX(0.8775);transform-origin:0 0;">LPLS</div>
<div style="position:absolute;left:52px;top:371px;height:20px;line-height:20px;font-size:12px;font-weight:400;color:#000;white-space:pre;transform:scaleX(0.8775);transform-origin:0 0;">Payment Plan loaded successfully - with suspensions</div>
<div style="position:absolute;left:526px;top:368px;height:20px;line-height:20px;font-size:12px;font-weight:400;color:#000;white-space:pre;transform:scaleX(0.8775);transform-origin:0 0;">- -</div>
<div style="position:absolute;left:586px;top:371px;width:192px;height:20px;overflow:hidden">
<div style="position:absolute;left:3px;top:0px;height:20px;line-height:20px;font-size:12px;font-weight:400;color:#000;white-space:pre;transform:scaleX(0.8775);transform-origin:0 0;"></div>
</div>
<div style="position:absolute;left:783px;top:371px;height:20px;line-height:20px;font-size:12px;font-weight:400;color:#000;white-space:pre;transform:scaleX(0.9);transform-origin:0 0;"></div>
<div style="position:absolute;left:8px;top:503px;width:935px;height:110px;background:linear-gradient(to bottom,rgba(0,0,0,0),rgba(0,20,40,0.05)),linear-gradient(to right,#c9dae7,#4a86b2)"></div>
<div style="position:absolute;left:10px;top:503px;width:928px;height:1px;background:#f4f8fc"></div>
<div style="position:absolute;left:82px;top:506px;height:20px;line-height:20px;font-size:12px;font-weight:400;color:#000;white-space:pre;transform:scaleX(0.8775);transform-origin:0 0;">PDA Fee:</div>
<div style="position:absolute;left:132px;top:508px;width:67px;height:15px;background:#c0c0c0;border:1px solid #808080;box-shadow:inset 0 0 0 1px #fff;box-sizing:border-box"></div>
<div style="position:absolute;right:757px;top:506px;height:20px;line-height:20px;font-size:12px;font-weight:400;color:#000;white-space:pre;transform:scaleX(0.8775);transform-origin:100% 0;">R35.00</div>
<div style="position:absolute;left:257px;top:506px;height:20px;line-height:20px;font-size:12px;font-weight:400;color:#000;white-space:pre;transform:scaleX(0.8775);transform-origin:0 0;">Totals</div>
<div style="position:absolute;left:288px;top:508px;width:80px;height:15px;background:#c0c0c0;border:1px solid #808080;box-shadow:inset 0 0 0 1px #fff;box-sizing:border-box"></div>
<div style="position:absolute;right:588px;top:506px;height:20px;line-height:20px;font-size:12px;font-weight:400;color:#000;white-space:pre;transform:scaleX(0.8775);transform-origin:100% 0;">R6.636.65</div>
<div style="position:absolute;left:370px;top:508px;width:70px;height:15px;background:#c0c0c0;border:1px solid #808080;box-shadow:inset 0 0 0 1px #fff;box-sizing:border-box"></div>
<div style="position:absolute;right:516px;top:506px;height:20px;line-height:20px;font-size:12px;font-weight:400;color:#000;white-space:pre;transform:scaleX(0.8775);transform-origin:100% 0;">R6.636.65</div>
<div style="position:absolute;left:448px;top:508px;width:86px;height:15px;background:#c0c0c0;border:1px solid #808080;box-shadow:inset 0 0 0 1px #fff;box-sizing:border-box"></div>
<div style="position:absolute;right:422px;top:506px;height:20px;line-height:20px;font-size:12px;font-weight:400;color:#000;white-space:pre;transform:scaleX(0.8775);transform-origin:100% 0;">R6.636.65</div>
<div style="position:absolute;left:572px;top:506px;height:20px;line-height:20px;font-size:12px;font-weight:400;color:#000;white-space:pre;transform:scaleX(0.8775);transform-origin:0 0;">Insurance:</div>
<div style="position:absolute;left:630px;top:508px;width:67px;height:15px;background:#c0c0c0;border:1px solid #808080;box-shadow:inset 0 0 0 1px #fff;box-sizing:border-box"></div>
<div style="position:absolute;right:259px;top:506px;height:20px;line-height:20px;font-size:12px;font-weight:400;color:#000;white-space:pre;transform:scaleX(0.8775);transform-origin:100% 0;">R275.00</div>
<div style="position:absolute;left:10px;top:534px;width:933px;height:79px;border:3px solid #ff0000;border-radius:11px;box-sizing:border-box"></div>
<div style="position:absolute;left:14px;top:544px;width:926px;height:56px;border:1px solid #e4e0da;border-top:none;box-sizing:border-box;border-radius:2px"></div>
<div style="position:absolute;left:14px;top:544px;width:6px;height:1px;background:#e4e0da"></div>
<div style="position:absolute;left:187px;top:544px;width:753px;height:1px;background:#e4e0da"></div>
<div style="position:absolute;left:22px;top:535px;height:20px;line-height:20px;font-size:12px;font-weight:400;color:#000;white-space:pre;transform:scaleX(0.87);transform-origin:0 0;">Uploaded Plan Integrity Agreement</div>
<div style="position:absolute;left:16px;top:554px;width:741px;height:42px;background:#00ffff"></div>
<div style="position:absolute;left:43px;top:554px;font-size:14px;font-weight:700;color:#0b0b8c;line-height:16px;white-space:pre;letter-spacing:0.2px">I 1. hereby acknowledge that the details contained in the current Payment Plan are as expected and</div>
<div style="position:absolute;left:51px;top:570px;font-size:14px;font-weight:700;color:#0b0b8c;line-height:16px;white-space:pre;letter-spacing:0.095px">assume responsibility for the integrity of the information uploaded to Hyphen in this Payment Plan.</div>
<div style="position:absolute;left:765px;top:576px;width:82px;height:19px;background:#e1e1e1;border:1px solid #adadad;box-sizing:border-box"></div>
<svg style="position:absolute;left:768px;top:578px" width="20" height="16" viewBox="0 0 20 16">
<defs><linearGradient id="ckg" x1="0" y1="0" x2="1" y2="1"><stop offset="0" stop-color="#30b040"/><stop offset="1" stop-color="#10902a"/></linearGradient></defs>
<path d="M1 9L4 6.5L7.5 10L16.5 1.5L19 4L7.5 15z" fill="url(#ckg)"/></svg>
<div style="position:absolute;left:789px;top:576px;height:20px;line-height:20px;font-size:12px;font-weight:400;color:#000;white-space:pre;transform:scaleX(0.8775);transform-origin:0 0;">I Agree</div>
<div style="position:absolute;left:854px;top:576px;width:82px;height:19px;background:#e1e1e1;border:1px solid #adadad;box-sizing:border-box"></div>
<svg style="position:absolute;left:857px;top:577px" width="18" height="18" viewBox="0 0 18 18">
<path d="M3 3L15 15M15 3L3 15" stroke="#c81010" stroke-width="4.5" stroke-linecap="square"/></svg>
<div style="position:absolute;left:878px;top:576px;height:20px;line-height:20px;font-size:12px;font-weight:400;color:#000;white-space:pre;transform:scaleX(0.8775);transform-origin:0 0;">I Disagree</div></body></html>
